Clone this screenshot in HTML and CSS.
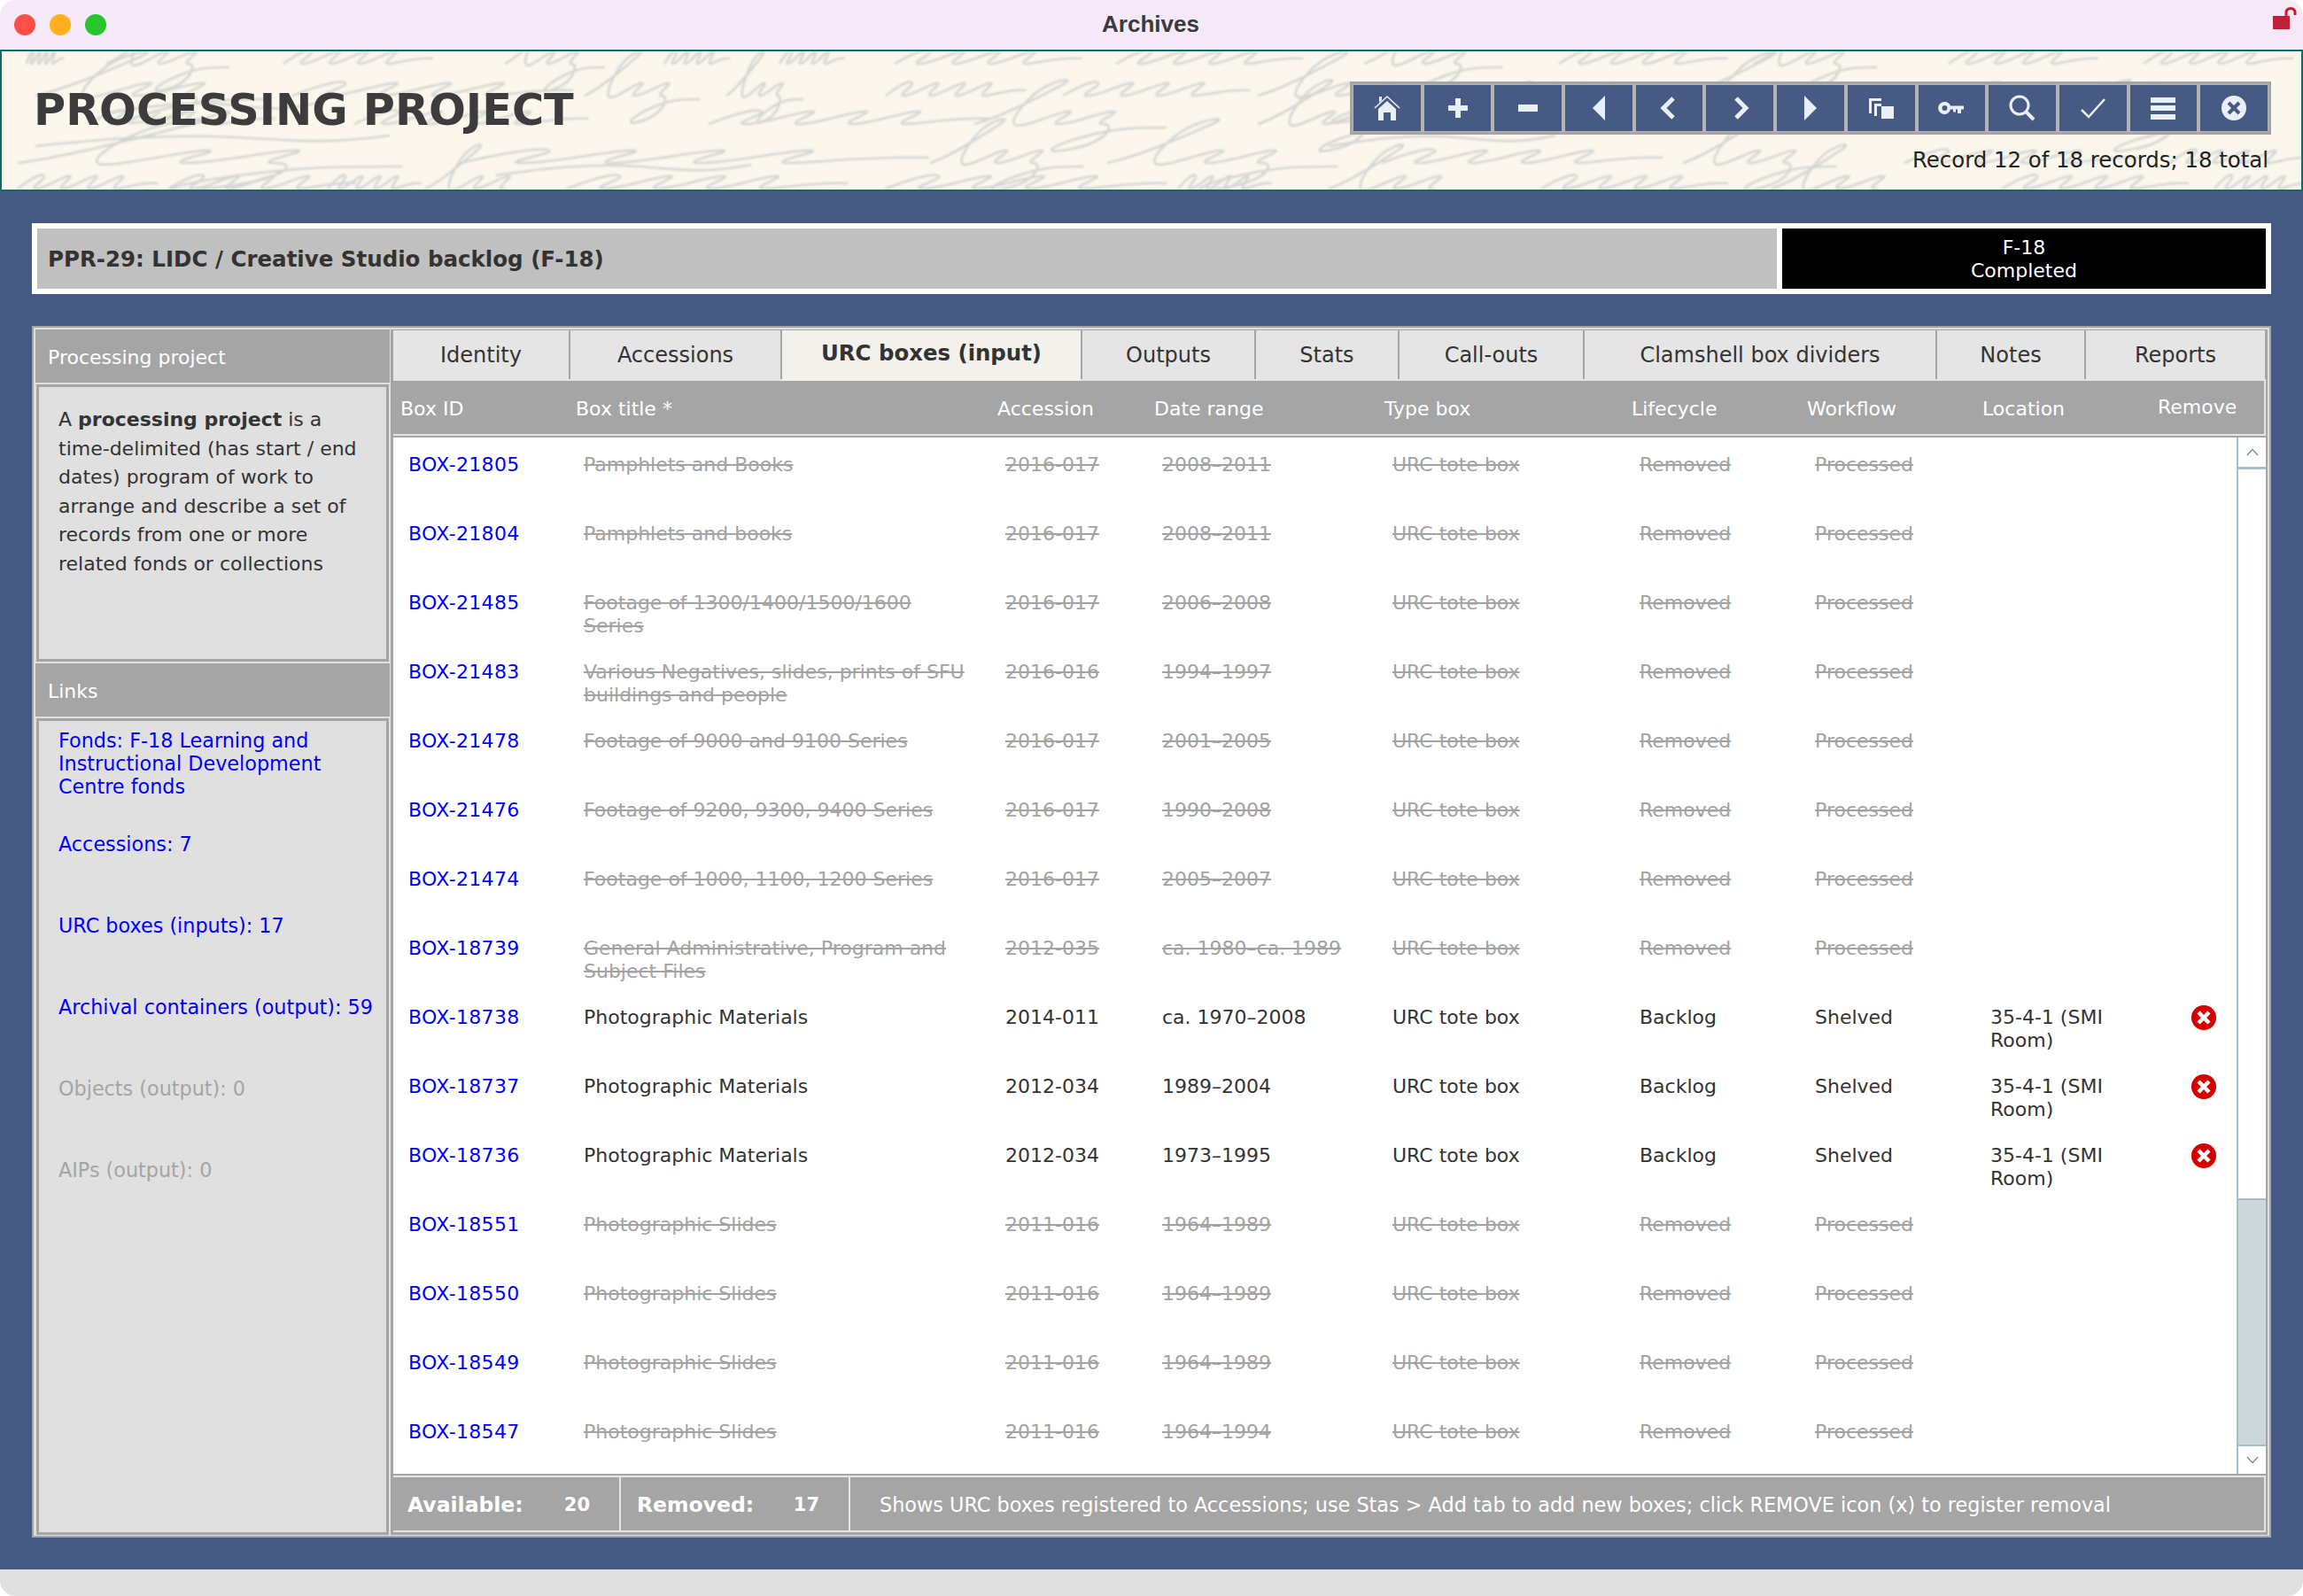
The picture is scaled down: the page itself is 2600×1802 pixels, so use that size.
FILE: index.html
```html
<!DOCTYPE html>
<html lang="en">
<head>
    <meta charset="UTF-8">
    <meta name="viewport" content="width=device-width, initial-scale=1.0">
    <title>Archives</title>
    <link rel="stylesheet" href="styles.css">
</head>
<body>
<div class="window">
    <div class="titlebar">
        <div class="lights">
            <span class="light red"></span>
            <span class="light amber"></span>
            <span class="light green"></span>
        </div>
        <div class="window-title">Archives</div>
        <svg class="lock" viewBox="0 0 28 25" width="28" height="25">
            <rect x="0" y="10" width="19" height="15" fill="#c41e3a"/>
            <path d="M15 11V6.500C15 3 17 1.500 20 1.500C23 1.500 25 3 25 6.500V9" fill="none" stroke="#c41e3a" stroke-width="3"/>
        </svg>
    </div>

    <header class="banner">
        <!-- faded ink on the paper background, just scribble strokes -->
        <svg class="paper" viewBox="0 58 2600 156" preserveAspectRatio="none" aria-hidden="true">
            <defs>
                <path id="inkA" class="ink" transform="skewX(-16)" d="M0 0c8-14 14-18 16-14s-8 14-2 14s14-12 20-14s-6 14 0 14s14-12 20-14s-6 14 0 14s14-12 20-14s-6 14 0 14s16-8 30-6"/>
                <path id="inkB" class="ink" transform="skewX(-16)" d="M0 0c10-8 20-30 26-42s-2-8-6 0s-6 34-2 42s14-12 20-14s-6 14 0 14s14-12 20-14s-6 14 0 14s8 20-6 28s-10-4 2-14s20-10 34-10"/>
                <path id="inkC" class="ink" d="M0 0c30-8 60-14 90-10s40 8 70-2"/>
            </defs>
            <use href="#inkA" transform="translate(30 72) scale(.4 1)"/>
            <use href="#inkB" transform="translate(120 72) scale(1.600 1)"/>
            <use href="#inkA" transform="translate(320 72) scale(1.600 1)"/>
            <use href="#inkB" transform="translate(570 72) scale(1.300 1)"/>
            <use href="#inkA" transform="translate(750 72) scale(.7 1)"/>
            <use href="#inkA" transform="translate(880 72) scale(.7 1)"/>
            <use href="#inkA" transform="translate(1010 72) scale(2 1)"/>
            <use href="#inkA" transform="translate(1260 72) scale(2 1)"/>
            <use href="#inkB" transform="translate(1540 72) scale(1.800 1)"/>
            <use href="#inkA" transform="translate(1760 72) scale(1.800 1)"/>
            <use href="#inkB" transform="translate(1980 72) scale(1.600 1)"/>
            <use href="#inkA" transform="translate(2200 72) scale(1.600 1)"/>
            <use href="#inkA" transform="translate(2420 72) scale(1.600 1)"/>

            <use href="#inkB" transform="translate(40 108) scale(3 1)"/>
            <use href="#inkA" transform="translate(330 108) scale(3 1)"/>
            <use href="#inkB" transform="translate(660 108) scale(1.500 1)"/>
            <use href="#inkB" transform="translate(820 108) scale(1 1)"/>
            <use href="#inkA" transform="translate(1000 108) scale(1.500 1)"/>
            <use href="#inkA" transform="translate(1200 108) scale(2 1)"/>
            <use href="#inkB" transform="translate(1420 108) scale(2.400 1)"/>
            <use href="#inkA" transform="translate(1700 108) scale(1.500 1)"/>
            <use href="#inkB" transform="translate(1900 108) scale(2.500 1)"/>
            <use href="#inkA" transform="translate(2200 108) scale(3 1)"/>

            <use href="#inkA" transform="translate(100 140) scale(2 1)"/>
            <use href="#inkA" transform="translate(400 140) scale(2.500 1)"/>
            <use href="#inkA" transform="translate(800 140) scale(3 1)"/>
            <use href="#inkB" transform="translate(1100 140) scale(2.500 1)"/>
            <use href="#inkB" transform="translate(1420 140) scale(2 1)"/>
            <use href="#inkA" transform="translate(1700 140) scale(2.400 1)"/>
            <use href="#inkA" transform="translate(2000 140) scale(2 1)"/>
            <use href="#inkB" transform="translate(2300 140) scale(2.500 1)"/>

            <use href="#inkB" transform="translate(20 184) scale(5 1)"/>
            <use href="#inkA" transform="translate(520 184) scale(5 1)"/>
            <use href="#inkB" transform="translate(1050 184) scale(2 1)"/>
            <use href="#inkB" transform="translate(1250 184) scale(3 1)"/>
            <use href="#inkA" transform="translate(1560 184) scale(3 1)"/>
            <use href="#inkB" transform="translate(1900 184) scale(2 1)"/>
            <use href="#inkA" transform="translate(2150 184) scale(2.500 1)"/>
            <use href="#inkA" transform="translate(2450 184) scale(1.500 1)"/>

            <use href="#inkA" transform="translate(20 213) scale(1.500 1)"/>
            <use href="#inkA" transform="translate(190 213) scale(2 1)"/>
            <use href="#inkA" transform="translate(370 213) scale(1 1)"/>
            <use href="#inkB" transform="translate(480 213) scale(1.500 1)"/>
            <use href="#inkA" transform="translate(640 213) scale(3 1)"/>
            <use href="#inkA" transform="translate(1000 213) scale(3 1)"/>
            <use href="#inkA" transform="translate(1330 213) scale(1 1)"/>
            <use href="#inkB" transform="translate(1500 213) scale(2 1)"/>
            <use href="#inkA" transform="translate(1740 213) scale(2 1)"/>
            <use href="#inkB" transform="translate(2000 213) scale(2 1)"/>
            <use href="#inkA" transform="translate(2260 213) scale(2 1)"/>
            <use href="#inkA" transform="translate(2500 213) scale(1 1)"/>

            <use href="#inkC" transform="translate(40 165) scale(2.500 1)"/>
            <use href="#inkC" transform="translate(120 128) scale(1.500 1)"/>
            <use href="#inkC" transform="translate(560 198) scale(1.800 1)"/>
            <use href="#inkC" transform="translate(1500 165) scale(1.600 1)"/>
        </svg>
        <h1>PROCESSING PROJECT</h1>
        <div class="banner-right">
            <div class="toolbar">
                <a class="tool"><svg viewBox="0 0 32 32"><path d="M2 16L16 3L30 16" fill="none" stroke="#e8eff5" stroke-width="1.600"/><path d="M7 3H10V7L7 10Z"/><path d="M16 8L26 17V30H20V21H12V30H6V17Z"/></svg></a>
                <a class="tool"><svg viewBox="0 0 32 32"><path d="M13 5H19V13H27V19H19V27H13V19H5V13H13Z"/></svg></a>
                <a class="tool"><svg viewBox="0 0 32 32"><rect x="5" y="12" width="22" height="8"/></svg></a>
                <a class="tool"><svg viewBox="0 0 32 32"><path d="M23 2V30L9 16Z"/></svg></a>
                <a class="tool"><svg viewBox="0 0 32 32"><path d="M20 5L9 16L20 27" fill="none" stroke="#e8eff5" stroke-width="5"/></svg></a>
                <a class="tool"><svg viewBox="0 0 32 32"><path d="M12 5L23 16L12 27" fill="none" stroke="#e8eff5" stroke-width="5"/></svg></a>
                <a class="tool"><svg viewBox="0 0 32 32"><path d="M9 2V30L23 16Z"/></svg></a>
                <a class="tool"><svg viewBox="0 0 32 32"><path d="M2 5H16V8H5V22H2Z"/><path d="M8 11H16V14H11V25H8Z"/><path d="M16 14H30V28H16Z"/></svg></a>
                <a class="tool"><svg viewBox="0 0 32 32"><path fill-rule="evenodd" d="M8.500 9A7 7 0 0 1 15 13.500H30V17.500H27V22H23V17.500H21V20.500H18V17.500H15A7 7 0 1 1 8.500 9ZM8.500 13A3 3 0 1 0 8.500 19A3 3 0 1 0 8.500 13Z"/></svg></a>
                <a class="tool"><svg viewBox="0 0 32 32"><circle cx="13" cy="13" r="10" fill="none" stroke="#e8eff5" stroke-width="3"/><path d="M20 20L29 29" fill="none" stroke="#e8eff5" stroke-width="4"/></svg></a>
                <a class="tool"><svg viewBox="0 0 32 32"><path d="M3 18L11 26L29 6" fill="none" stroke="#e8eff5" stroke-width="2.500"/></svg></a>
                <a class="tool"><svg viewBox="0 0 32 32"><rect x="2" y="4" width="28" height="6"/><rect x="2" y="13" width="28" height="6"/><rect x="2" y="23" width="28" height="6"/></svg></a>
                <a class="tool"><svg viewBox="0 0 32 32"><circle cx="16" cy="16" r="14"/><path d="M10 10L22 22M22 10L10 22" fill="none" stroke="#475a83" stroke-width="4"/></svg></a>
            </div>
            <p class="record-count">Record 12 of 18 records; 18 total</p>
        </div>
    </header>

    <main class="content">
        <div class="project-bar">
            <div class="project-name">PPR-29: LIDC / Creative Studio backlog (F-18)</div>
            <div class="project-status">F-18<br>Completed</div>
        </div>

        <div class="panel">
            <aside class="sidebar">
                <div class="side-head">Processing project</div>
                <div class="side-box intro">A <b>processing project</b> is a time-delimited (has start / end dates) program of work to arrange and describe a set of records from one or more related fonds or collections</div>
                <div class="side-head">Links</div>
                <div class="side-box links">
                    <a class="side-link first" href="#">Fonds: F-18 Learning and Instructional Development Centre fonds</a>
                    <a class="side-link" href="#">Accessions: 7</a>
                    <a class="side-link" href="#">URC boxes (inputs): 17</a>
                    <a class="side-link" href="#">Archival containers (output): 59</a>
                    <span class="side-link off">Objects (output): 0</span>
                    <span class="side-link off">AIPs (output): 0</span>
                </div>
            </aside>

            <section class="main">
                <nav class="tabs">
                    <a class="tab">Identity</a>
                    <a class="tab">Accessions</a>
                    <a class="tab active">URC boxes (input)</a>
                    <a class="tab">Outputs</a>
                    <a class="tab">Stats</a>
                    <a class="tab">Call-outs</a>
                    <a class="tab">Clamshell box dividers</a>
                    <a class="tab">Notes</a>
                    <a class="tab">Reports</a>
                </nav>

                <div class="table-head">
                    <span>Box ID</span>
                    <span>Box title *</span>
                    <span>Accession</span>
                    <span>Date range</span>
                    <span>Type box</span>
                    <span>Lifecycle</span>
                    <span>Workflow</span>
                    <span>Location</span>
                    <span class="head-remove">Remove</span>
                </div>

                <div class="list">
                    <div class="rows">
                        <div class="row gone">
                            <a href="#">BOX-21805</a><span>Pamphlets and Books</span><span>2016-017</span><span>2008–2011</span><span>URC tote box</span><span>Removed</span><span>Processed</span>
                        </div>
                        <div class="row gone">
                            <a href="#">BOX-21804</a><span>Pamphlets and books</span><span>2016-017</span><span>2008–2011</span><span>URC tote box</span><span>Removed</span><span>Processed</span>
                        </div>
                        <div class="row gone">
                            <a href="#">BOX-21485</a><span>Footage of 1300/1400/1500/1600 Series</span><span>2016-017</span><span>2006–2008</span><span>URC tote box</span><span>Removed</span><span>Processed</span>
                        </div>
                        <div class="row gone">
                            <a href="#">BOX-21483</a><span>Various Negatives, slides, prints of SFU buildings and people</span><span>2016-016</span><span>1994–1997</span><span>URC tote box</span><span>Removed</span><span>Processed</span>
                        </div>
                        <div class="row gone">
                            <a href="#">BOX-21478</a><span>Footage of 9000 and 9100 Series</span><span>2016-017</span><span>2001–2005</span><span>URC tote box</span><span>Removed</span><span>Processed</span>
                        </div>
                        <div class="row gone">
                            <a href="#">BOX-21476</a><span>Footage of 9200, 9300, 9400 Series</span><span>2016-017</span><span>1990–2008</span><span>URC tote box</span><span>Removed</span><span>Processed</span>
                        </div>
                        <div class="row gone">
                            <a href="#">BOX-21474</a><span>Footage of 1000, 1100, 1200 Series</span><span>2016-017</span><span>2005–2007</span><span>URC tote box</span><span>Removed</span><span>Processed</span>
                        </div>
                        <div class="row gone">
                            <a href="#">BOX-18739</a><span>General Administrative, Program and Subject Files</span><span>2012-035</span><span>ca. 1980–ca. 1989</span><span>URC tote box</span><span>Removed</span><span>Processed</span>
                        </div>
                        <div class="row">
                            <a href="#">BOX-18738</a><span>Photographic Materials</span><span>2014-011</span><span>ca. 1970–2008</span><span>URC tote box</span><span>Backlog</span><span>Shelved</span><span>35-4-1 (SMI Room)</span>
                            <svg class="remove" viewBox="0 0 28 28"><circle cx="14" cy="14" r="14"/><path d="M8 8L20 20M20 8L8 20"/></svg>
                        </div>
                        <div class="row">
                            <a href="#">BOX-18737</a><span>Photographic Materials</span><span>2012-034</span><span>1989–2004</span><span>URC tote box</span><span>Backlog</span><span>Shelved</span><span>35-4-1 (SMI Room)</span>
                            <svg class="remove" viewBox="0 0 28 28"><circle cx="14" cy="14" r="14"/><path d="M8 8L20 20M20 8L8 20"/></svg>
                        </div>
                        <div class="row">
                            <a href="#">BOX-18736</a><span>Photographic Materials</span><span>2012-034</span><span>1973–1995</span><span>URC tote box</span><span>Backlog</span><span>Shelved</span><span>35-4-1 (SMI Room)</span>
                            <svg class="remove" viewBox="0 0 28 28"><circle cx="14" cy="14" r="14"/><path d="M8 8L20 20M20 8L8 20"/></svg>
                        </div>
                        <div class="row gone">
                            <a href="#">BOX-18551</a><span>Photographic Slides</span><span>2011-016</span><span>1964–1989</span><span>URC tote box</span><span>Removed</span><span>Processed</span>
                        </div>
                        <div class="row gone">
                            <a href="#">BOX-18550</a><span>Photographic Slides</span><span>2011-016</span><span>1964–1989</span><span>URC tote box</span><span>Removed</span><span>Processed</span>
                        </div>
                        <div class="row gone">
                            <a href="#">BOX-18549</a><span>Photographic Slides</span><span>2011-016</span><span>1964–1989</span><span>URC tote box</span><span>Removed</span><span>Processed</span>
                        </div>
                        <div class="row gone">
                            <a href="#">BOX-18547</a><span>Photographic Slides</span><span>2011-016</span><span>1964–1994</span><span>URC tote box</span><span>Removed</span><span>Processed</span>
                        </div>
                    </div>
                    <div class="scrollbar">
                        <div class="scroll-btn top"><svg viewBox="0 0 16 10" width="14" height="9"><path d="M1 9L8 1.500L15 9"/></svg></div>
                        <div class="scroll-thumb"></div>
                        <div class="scroll-track"></div>
                        <div class="scroll-btn bottom"><svg viewBox="0 0 16 10" width="14" height="9"><path d="M1 1L8 8.500L15 1"/></svg></div>
                    </div>
                </div>

                <div class="table-foot">
                    <div class="count"><b>Available:</b><b class="num">20</b></div>
                    <div class="count"><b>Removed:</b><b class="num">17</b></div>
                    <div class="foot-note">Shows URC boxes registered to Accessions; use Stas &gt; Add tab to add new boxes; click REMOVE icon (x) to register removal</div>
                </div>
            </section>
        </div>
    </main>

    <div class="window-foot"></div>
</div>
</body>
</html>
```

FILE: styles.css
```css
* {
    box-sizing: border-box;
}

html, body {
    margin: 0;
    padding: 0;
    background-color: #fff;
}

body {
    font-family: "DejaVu Sans", Verdana, sans-serif;
    font-size: 22px;
    line-height: 26px;
    color: #333;
}

a {
    color: #0000ff;
    text-decoration: none;
}

.window {
    width: 2600px;
    height: 1802px;
    border-radius: 18px;
    overflow: hidden;
    display: flex;
    flex-direction: column;
}

/* title bar */
.titlebar {
    height: 56px;
    flex: none;
    background-color: #f5e9f7;
    position: relative;
    display: flex;
    align-items: center;
    justify-content: center;
}

.lights {
    position: absolute;
    left: 16px;
    top: 16px;
    display: flex;
    gap: 16px;
}

.light {
    width: 24px;
    height: 24px;
    border-radius: 50%;
}

.red { background-color: #ff4f4b; }
.amber { background-color: #ffb020; }
.green { background-color: #28c62e; }

.window-title {
    font-family: "Liberation Sans", Arial, sans-serif;
    font-weight: bold;
    font-size: 26px;
    color: #3a3a3a;
    margin-top: -2px;
    margin-left: -2px;
}

.lock {
    position: absolute;
    right: 6px;
    top: 8px;
}

/* banner */
.banner {
    height: 160px;
    flex: none;
    position: relative;
    overflow: hidden;
    border: 2px solid #0b6d6d;
    background-color: #fcf7ec;
    display: flex;
    justify-content: space-between;
    padding: 34px 34px 0 36px;
}

.paper {
    position: absolute;
    left: -2px;
    top: 0;
    width: 2600px;
    height: 156px;
    filter: blur(0.9px);
}

.ink {
    fill: none;
    stroke: #d2d6d2;
    stroke-width: 2.600;
    vector-effect: non-scaling-stroke;
}

.banner h1 {
    position: relative;
    margin: 4px 0 0;
    font-size: 49.300px;
    line-height: 56px;
    font-weight: bold;
    color: #3c3c3c;
}

.banner-right {
    position: relative;
    display: flex;
    flex-direction: column;
    align-items: flex-end;
}

.toolbar {
    width: 1040px;
    height: 60px;
    display: flex;
    gap: 4px;
    padding: 1px;
    background-color: #b4b4b4;
    border: 3px solid #a5a5a5;
}

.tool {
    flex: 1;
    background-color: #475a83;
    display: flex;
    align-items: center;
    justify-content: center;
}

.tool svg {
    width: 32px;
    height: 32px;
    fill: #e8eff5;
}

.record-count {
    margin: 16px 3px 0 0;
    font-size: 24.400px;
    color: #222;
}

/* main area */
.content {
    flex: 1;
    background-color: #475a83;
    padding: 36px;
    display: flex;
    flex-direction: column;
    gap: 36px;
    min-height: 0;
}

.project-bar {
    height: 80px;
    flex: none;
    background-color: #fff;
    padding: 6px;
    display: flex;
    gap: 6px;
}

.project-name {
    flex: 1;
    background-color: #c0c0c0;
    padding: 2px 0 0 12px;
    display: flex;
    align-items: center;
    font-weight: bold;
    font-size: 24.500px;
}

.project-status {
    width: 546px;
    background-color: #000;
    color: #fff;
    text-align: center;
    padding-top: 2px;
    display: flex;
    align-items: center;
    justify-content: center;
}

.panel {
    flex: 1;
    min-height: 0;
    border: 2px solid #a5a5a5;
    background-color: #e0e0e0;
    padding: 2px 2px 1px;
    display: flex;
    gap: 1px;
}

/* sidebar */
.sidebar {
    width: 400px;
    flex: none;
    display: flex;
    flex-direction: column;
}

.side-head {
    height: 60px;
    flex: none;
    background-color: #a5a5a5;
    color: #fff;
    padding: 3px 0 0 14px;
    display: flex;
    align-items: center;
}

.side-box {
    margin: 2px 1px;
    border: 3px solid #a5a5a5;
    background-color: #e0e0e0;
    padding-left: 22px;
    padding-right: 14px;
}

.intro {
    height: 313px;
    flex: none;
    padding-top: 21px;
    line-height: 32.500px;
}

.links {
    flex: 1;
    margin-bottom: 0;
    padding-top: 9px;
    padding-right: 4px;
    font-size: 22.300px;
}

.side-link {
    display: block;
    margin-bottom: 66px;
}

.side-link.first {
    margin-bottom: 39px;
    margin-right: 14px;
}

.side-link.off {
    color: #a5a5a5;
}

/* tabs and table */
.main {
    flex: 1;
    min-width: 0;
    display: flex;
    flex-direction: column;
    border: 3px solid #a5a5a5;
    border-width: 1px 2px 3px 3px;
    background-color: #e6e6e0;
}

.tabs {
    height: 55px;
    flex: none;
    display: grid;
    grid-template-columns: 198px 237px 337px 194px 160px 207px 396px 166px 1fr;
    gap: 2px;
    background-color: #a5a5a5;
    padding-bottom: 2px;
    padding-right: 1px;
}

.tab {
    background-color: #e5e5e5;
    color: #333;
    padding-bottom: 2px;
    display: flex;
    align-items: center;
    justify-content: center;
    font-size: 24px;
}

.tab.active {
    background-color: #f2f1ec;
    font-weight: bold;
    font-size: 24.400px;
    height: 57px;
    padding-bottom: 6px;
    position: relative;
    z-index: 1;
}

.table-head {
    height: 60px;
    flex: none;
    margin: 2px 2px 0 0;
    padding: 3px 0 0 8px;
    background-color: #a5a5a5;
    color: #fff;
    display: grid;
    grid-template-columns: 198px 476px 177px 260px 279px 198px 198px 198px 1fr;
    align-items: center;
}

.head-remove {
    margin-top: -4px;
}

.list {
    height: 1174px;
    flex: none;
    margin-top: 2px;
    border-top: 2px solid #a5a5a5;
    border-bottom: 2px solid #a5a5a5;
    background-color: #fff;
    display: flex;
}

.rows {
    flex: 1;
    min-width: 0;
}

.row {
    height: 78px;
    display: grid;
    grid-template-columns: 198px 476px 177px 260px 279px 198px 198px 198px 1fr;
    padding: 18px 0 0 8px;
}

.row > a,
.row > span {
    padding-left: 9px;
}

.row > a {
    letter-spacing: 0.35px;
}

.row > span:nth-child(2) {
    padding-right: 29px;
}

.row > span:nth-child(8) {
    padding-right: 10px;
}

.gone > span {
    color: #a3a3a3;
    text-decoration: line-through;
}

.remove {
    width: 28px;
    height: 28px;
    margin: -1px 0 0 38px;
}

.remove circle {
    fill: #d40000;
}

.remove path {
    fill: none;
    stroke: #fff;
    stroke-width: 4.500;
}

.scrollbar {
    width: 33px;
    flex: none;
    border-left: 2px solid #a9bcc8;
    display: flex;
    flex-direction: column;
}

.scroll-btn {
    height: 33px;
    flex: none;
    display: flex;
    align-items: center;
    justify-content: center;
}

.scroll-btn svg {
    fill: none;
    stroke: #6f8ba0;
    stroke-width: 1.500;
}

.scroll-btn.top {
    height: 36px;
    border-bottom: 3px solid #a9bcc8;
}

.scroll-btn.bottom {
    border-top: 2px solid #a9bcc8;
}

.scroll-thumb {
    height: 823px;
    flex: none;
}

.scroll-track {
    flex: 1;
    background-color: #cdd8dd;
    border-top: 2px solid #a9bcc8;
}

.table-foot {
    height: 60px;
    flex: none;
    margin: 2px 2px 2px 0;
    background-color: #a5a5a5;
    color: #fff;
    display: flex;
    gap: 2px;
}

.count {
    width: 257px;
    flex: none;
    padding: 2px 0 0 16px;
    display: flex;
    align-items: center;
    background-color: #a5a5a5;
    border-right: 2px solid #e6e6e0;
    font-size: 23.500px;
    position: relative;
}

.num {
    position: absolute;
    right: 33px;
    font-size: 21px;
}

.foot-note {
    flex: 1;
    padding: 2px 0 0 31px;
    display: flex;
    align-items: center;
    font-size: 22.350px;
}

.window-foot {
    height: 30px;
    flex: none;
    background-color: #e0e0e0;
}
```
